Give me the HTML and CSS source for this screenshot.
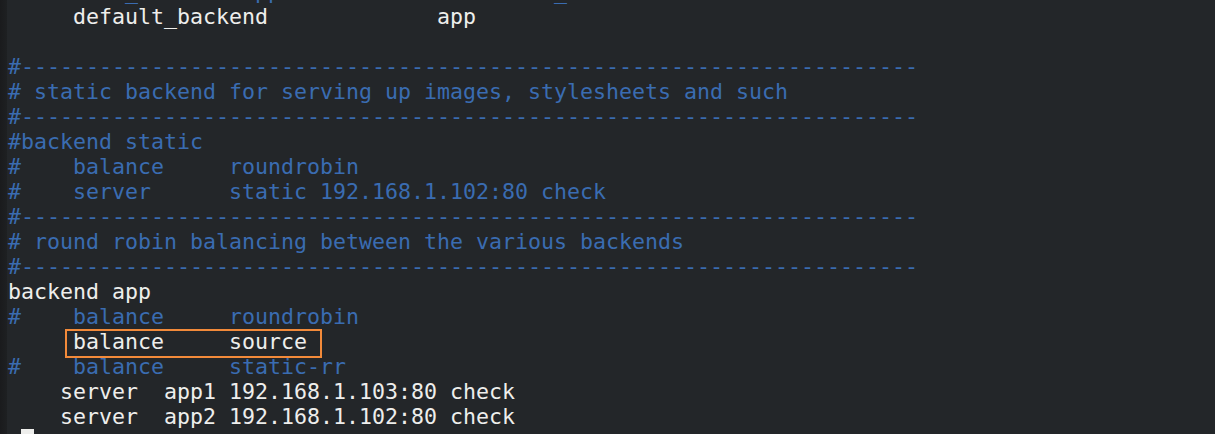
FILE: index.html
```html
<!DOCTYPE html>
<html lang="en">
<head>
    <meta charset="UTF-8">
    <meta name="viewport" content="width=device-width, initial-scale=1.0">
    <title>haproxy.cfg</title>
    <link rel="stylesheet" href="styles.css">
</head>
<body>
    <div class="window">
        <div class="gutter"></div>
        <div class="screen">
<pre class="buffer"><span class="comment">#     use_backend app               if url_static</span>
     default_backend             app

<span class="comment">#---------------------------------------------------------------------</span>
<span class="comment"># static backend for serving up images, stylesheets and such</span>
<span class="comment">#---------------------------------------------------------------------</span>
<span class="comment">#backend static</span>
<span class="comment">#    balance     roundrobin</span>
<span class="comment">#    server      static 192.168.1.102:80 check</span>
<span class="comment">#---------------------------------------------------------------------</span>
<span class="comment"># round robin balancing between the various backends</span>
<span class="comment">#---------------------------------------------------------------------</span>
backend app
<span class="comment">#    balance     roundrobin</span>
     balance     source
<span class="comment">#    balance     static-rr</span>
    server  app1 192.168.1.103:80 check
    server  app2 192.168.1.102:80 check
 <span class="cursor"> </span></pre>
            <div class="mark"></div>
        </div>
    </div>
</body>
</html>
```

FILE: styles.css
```css
html, body {
    margin: 0;
    padding: 0;
    background-color: #232629;
}
.window {
    display: flex;
    height: 434px;
    overflow: hidden;
    background-color: #232629;
}
.gutter {
    width: 7px;
    flex-shrink: 0;
    background: linear-gradient(to right, #1a1b1d, #1e2022);
}
.screen {
    position: relative;
    flex: 1;
    padding-left: 1px;
}
.buffer {
    margin: -21px 0 0;
    font-family: "DejaVu Sans Mono", "Liberation Mono", monospace;
    font-size: 21.6px;
    line-height: 25px;
    color: #eeeeec;
}
.comment {
    color: #3a6cb1;
}
.cursor {
    display: inline-block;
    width: 13px;
    height: 25px;
    vertical-align: top;
    background-color: #eeeeec;
}
/* orange annotation frame around the active balance line */
.mark {
    position: absolute;
    left: 58px;
    top: 329px;
    width: 257px;
    height: 29px;
    box-sizing: border-box;
    border: 2px solid #f28a3a;
}
```
